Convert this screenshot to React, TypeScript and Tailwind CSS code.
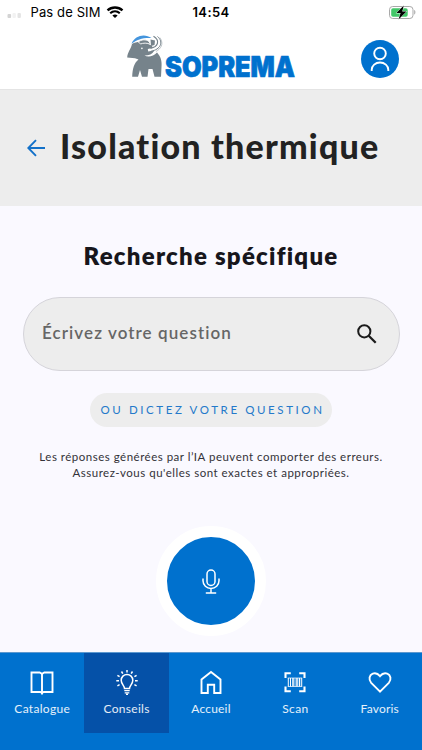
import type { ReactNode } from 'react'

type Tab = {
  label: string
  labelClass: string
  icon: ReactNode
  active?: boolean
}

function StatusBar() {
  return (
    <div className="grid h-[24px] grid-cols-[1fr_auto_1fr] items-center font-['Inter',sans-serif] text-black">
      <div className="flex items-center pl-[7px]">
        <svg className="mt-[3px]" width="16" height="8" viewBox="0 0 16 8">
          <rect x="0.5" y="4" width="3.6" height="4" rx="1" fill="#d4d4d4" />
          <rect x="5.5" y="3" width="3.4" height="5" rx="1" fill="#f2f2f2" />
          <rect x="10.5" y="3" width="3.4" height="5" rx="1" fill="#e4e4e4" />
        </svg>
        <span className="ml-[7.5px] text-[13px] leading-none tracking-[0.12px]">Pas de SIM</span>
        <svg className="ml-[5px]" width="18" height="13" viewBox="0 0 17 13" fill="none" stroke="#000">
          <path d="M1 4.400C5.200.5 11.800.5 16 4.400" strokeWidth="2.300" />
          <path d="M3.700 7.300c2.800-2.500 6.800-2.500 9.600 0" strokeWidth="2.200" />
          <path d="M5.900 9.400c1.500-1.300 3.700-1.300 5.200 0L8.500 12z" fill="#000" stroke="none" />
        </svg>
      </div>
      <span className="text-[13px] font-semibold leading-none tracking-[0.4px]">14:54</span>
      <div className="flex justify-end pr-[5px]">
        <svg width="29" height="15" viewBox="0 0 29 15">
          <rect x="1.500" y="1.500" width="23.500" height="12" rx="3.200" fill="#fff" stroke="#a9a9a9" />
          <path d="M26.200 5v4.500c1.600-.6 1.600-3.900 0-4.500" fill="#a9a9a9" />
          <rect x="3.200" y="3.200" width="16.500" height="8.600" rx="1.800" fill="#42c768" />
          <path d="M15.800.5 8.400 8.100h4.200L10.500 14.500l8-8h-4.300z" fill="#000" stroke="#fff" strokeWidth="0.800" paintOrder="stroke" />
        </svg>
      </div>
    </div>
  )
}

function Logo() {
  return (
    <svg className="overflow-visible" width="172" height="54" viewBox="0 0 172 54" aria-label="Soprema">
      <path
        d="M6 9C5 14 1.500 17 1.200 22.500L9 23.200L12.500 24.500C8 28 6.500 34 6.200 41.700H12L14 35L16 41.700H21.500L22.500 34H26.500L28.500 41.700H35L35.500 32C36.200 26 34.500 21 31 17.500C27.500 21.500 22 22.500 18.500 20.500C23 20.500 26.500 19 28 16L26 11C21 6.500 11 6 6 9Z"
        fill="#76838b"
      />
      <path d="M5.500 8.700C9 0 19-1.800 25.500 3C17 2.500 11 4.500 5.500 8.700Z" fill="#4495dd" />
      <path d="M12.500 7C15 4.500 20 4 23 6.500L24.500 9.500C21 7.500 17 8 14.500 9Z" fill="#76838b" stroke="#fff" strokeWidth=".9" />
      <path d="M24.500 4.500L29 5.500L28.500 10L25 11Z" fill="#76838b" />
      <path d="M27 1.200C36 5.500 33 13.500 22 15.300" fill="none" stroke="#fff" strokeWidth="2.600" />
      <path d="M27.500 1.200C34.500 5.500 32 12 24.500 13.300" fill="none" stroke="#76838b" strokeWidth="1.200" />
      <path d="M31.500 1.500C38 7 34.500 14.500 25 16.300" fill="none" stroke="#76838b" strokeWidth="1" />
      <path d="M33.800 2.500C38.500 9 34.500 14 30 16.500" fill="none" stroke="#a4adb3" strokeWidth=".7" />
      <circle cx="15.900" cy="13.400" r=".8" fill="#fff" />
      <text
        x="39"
        y="41.700"
        textLength="130"
        lengthAdjust="spacingAndGlyphs"
        fill="#0071ce"
        stroke="#0071ce"
        strokeWidth=".7"
        className="font-['Inter',sans-serif] text-[28.5px] font-black"
      >
        SOPREMA
      </text>
    </svg>
  )
}

function Header() {
  return (
    <header className="flex h-[65px] items-start pl-[126px]">
      <div className="pt-[11px]">
        <Logo />
      </div>
      <button className="ml-[63px] mt-[16px] flex h-[38px] w-[38px] shrink-0 items-center justify-center rounded-full bg-[#0071ce]">
        <svg width="20" height="26" viewBox="0 0 20 26" fill="none" stroke="#fff" strokeWidth="1.900">
          <circle cx="10" cy="7.500" r="5.800" />
          <path d="M1.700 25v-1.200a8.300 7.300 0 0 1 16.600 0V25" />
        </svg>
      </button>
    </header>
  )
}

const tabs: Tab[] = [
  {
    label: 'Catalogue',
    labelClass: 'tracking-[0.3px]',
    icon: (
      <>
        <path d="M3.500 4.500h8.200L14 5.800l2.300-1.300h8.200v19.500h-8.800L14 25l-1.700-1H3.500z" strokeWidth="1.900" />
        <path d="M14 5.500V26.500" strokeWidth="1.900" />
      </>
    ),
  },
  {
    label: 'Conseils',
    labelClass: 'tracking-[0.3px]',
    active: true,
    icon: (
      <>
        <path d="M11.500 20.500c0-2.800-3.300-4.200-3.300-8.300a5.800 5.800 0 0 1 11.600 0c0 4.100-3.300 5.500-3.300 8.300z" strokeWidth="1.500" />
        <path d="M11.300 22.700h5.400M11.700 24.800h4.600M13 26.400h2" strokeWidth="1.300" />
        <path d="M14 4.600V2M9.800 5.700 8.500 3.500M18.200 5.700l1.300-2.200M6.600 8.700 4.400 7.400M21.400 8.700l2.200-1.300M6 12.800H3.300M22 12.800h2.700M6.600 16.700l-2.200 1.200M21.400 16.700l2.200 1.200" strokeWidth="1.500" />
      </>
    ),
  },
  {
    label: 'Accueil',
    labelClass: 'tracking-[0.2px]',
    icon: <path d="M4.500 25v-13.500L14 4l9.500 7.500V25h-6.300v-8.300h-6.400V25z" strokeWidth="1.900" />,
  },
  {
    label: 'Scan',
    labelClass: 'tracking-[0.3px]',
    icon: (
      <>
        <path d="M4.500 10V5.200h5.300M18.200 5.200h5.300V10M23.500 18.500v4.800h-5.300M9.800 23.300H4.500v-4.800" strokeWidth="2.100" />
        <path d="M7.300 10v8.600M9.500 10v8.600M20.700 10v8.600" strokeWidth="1" />
        <path d="M12 10v8.600M16 10v8.600M18.500 10v8.600" strokeWidth="1.500" />
        <path d="M6.800 10h14.400M6.800 18.500h14.400M14 10v8.600" strokeWidth=".7" />
      </>
    ),
  },
  {
    label: 'Favoris',
    labelClass: 'tracking-[0.2px]',
    icon: (
      <path
        d="M14 23.700 5.200 14.800C2.300 11.600 3.300 7 6.700 5.700 9.600 4.500 12 5.700 14 8.200c2-2.500 4.400-3.700 7.300-2.500 3.400 1.300 4.400 5.900 1.500 9.100z"
        strokeWidth="1.900"
      />
    ),
  },
]

function TabBar() {
  return (
    <nav className="grid h-[98px] grid-cols-5 items-start border-t border-[#5c98cf] bg-[#0071ce]">
      {tabs.map((tab) => (
        <button
          key={tab.label}
          className={`flex h-[80px] flex-col items-center pt-[15px] text-white ${tab.active ? 'bg-[#0551a8]' : ''}`}
        >
          <svg width="28" height="28" viewBox="0 0 28 28" fill="none" stroke="currentColor">
            {tab.icon}
          </svg>
          <span className={`mt-[5px] text-[12px] leading-[16px] text-white/90 ${tab.labelClass}`}>{tab.label}</span>
        </button>
      ))}
    </nav>
  )
}

export default function App() {
  return (
    <div className="flex h-[750px] w-[422px] flex-col overflow-hidden bg-white font-['Lato',sans-serif]">
      <StatusBar />
      <Header />
      <section className="flex h-[117px] items-start border-t border-[#e4e4e4] bg-[#ededed] pl-[27px] pt-[36px]">
        <svg className="mt-[13px] shrink-0" width="19" height="18" viewBox="0 0 19 18" fill="none" stroke="#1371c9" strokeWidth="1.900">
          <path d="M18 9H1.500M9 1.200 1.300 9 9 16.800" />
        </svg>
        <h1 className="ml-[14px] whitespace-nowrap text-[34px] font-black leading-[40px] tracking-[1.2px] text-[#222]">
          Isolation thermique
        </h1>
      </section>
      <main className="flex flex-1 flex-col items-center bg-[#faf9ff]">
        <h2 className="mt-[35px] whitespace-nowrap text-[24px] font-extrabold leading-[30px] tracking-[1.25px] text-[#17161c]">
          Recherche spécifique
        </h2>
        <div className="mt-[26px] flex h-[74px] w-[377px] items-center justify-between rounded-full border border-[#d5d4da] bg-[#ededed] pl-[18.5px] pr-[22px]">
          <span className="whitespace-nowrap pb-[3px] text-[17px] font-semibold tracking-[1.08px] text-[#666]">
            Écrivez votre question
          </span>
          <svg width="20" height="20" viewBox="0 0 20 20" fill="none" stroke="#1b1b1b" strokeWidth="2">
            <circle cx="7.300" cy="7.300" r="6.100" />
            <path d="m11.700 11.700 7 7" strokeWidth="2.300" />
          </svg>
        </div>
        <button className="mt-[22px] flex h-[34px] w-[242px] items-center justify-center rounded-full bg-[#ededed] pl-[3px] text-[11.5px] tracking-[2.6px] text-[#2479ca]">
          <span className="whitespace-nowrap">OU DICTEZ VOTRE QUESTION</span>
        </button>
        <p className="mt-[22px] text-center text-[11.500px] leading-[16px] tracking-[0.5px] text-[#333238]">
          <span className="block whitespace-nowrap">Les réponses générées par l’IA peuvent comporter des erreurs.</span>
          <span className="block whitespace-nowrap">Assurez-vous qu'elles sont exactes et appropriées.</span>
        </p>
        <button className="mt-[45px] flex h-[110px] w-[110px] items-center justify-center rounded-full border-[11px] border-white bg-[#0071ce]">
          <svg width="18" height="25" viewBox="0 0 18 25" fill="none" stroke="#fff" strokeWidth="1.500">
            <rect x="5" y="1" width="8" height="15.500" rx="4" />
            <path d="M1 9.500v2.300a8 7.700 0 0 0 16 0V9.500M9 19.600V24M3.800 24h10.400" />
          </svg>
        </button>
      </main>
      <TabBar />
    </div>
  )
}
